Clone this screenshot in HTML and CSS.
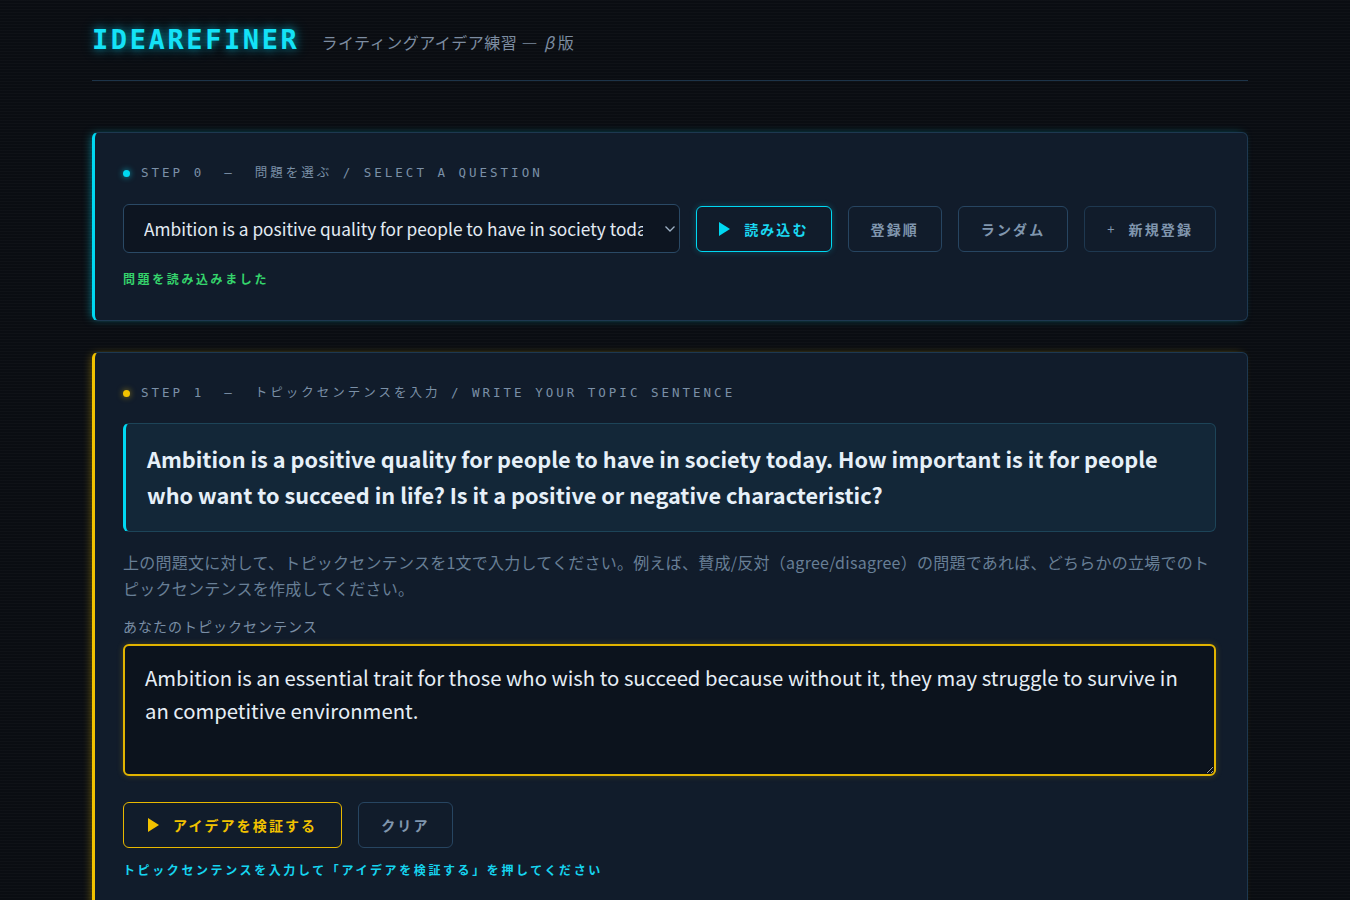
FILE: index.html
```html
<!DOCTYPE html>
<html lang="ja">
<head>
<meta charset="utf-8">
<title>IdeaRefiner</title>
<link rel="stylesheet" href="styles.css">
</head>
<body>
<div class="page">
  <header class="header">
    <div class="logo">IDEAREFINER</div>
    <div class="subtitle">ライティングアイデア練習 — <i>β</i>版</div>
  </header>

  <section class="card card-cyan">
    <div class="step"><span class="dot dot-cyan"></span>STEP 0<span class="sep">—</span>問題を選ぶ / SELECT A QUESTION</div>
    <div class="row">
      <div class="select-wrap">
        <select class="select">
          <option>Ambition is a positive quality for people to have in society today. How important is it for people who want to succeed in life? Is it a positive or negative characteristic?</option>
        </select>
        <svg class="chev" width="12" height="8" viewBox="0 0 12 8"><path d="M1.5 1.5 L6 6 L10.5 1.5" fill="none" stroke="#9fb2c6" stroke-width="1.3"/></svg>
      </div>
      <button class="btn btn-cyan"><span class="tri"></span>読み込む</button>
      <button class="btn">登録順</button>
      <button class="btn">ランダム</button>
      <button class="btn btn-dim"><span class="plus">+</span>新規登録</button>
    </div>
    <div class="status status-green">問題を読み込みました</div>
  </section>

  <section class="card card-yellow">
    <div class="step"><span class="dot dot-yellow"></span>STEP 1<span class="sep">—</span>トピックセンテンスを入力 / WRITE YOUR TOPIC SENTENCE</div>
    <div class="question">Ambition is a positive quality for people to have in society today. How important is it for people who want to succeed in life? Is it a positive or negative characteristic?</div>
    <p class="desc">上の問題文に対して、トピックセンテンスを1文で入力してください。例えば、賛成/反対（agree/disagree）の問題であれば、どちらかの立場でのトピックセンテンスを作成してください。</p>
    <div class="label">あなたのトピックセンテンス</div>
    <textarea class="answer">Ambition is an essential trait for those who wish to succeed because without it, they may struggle to survive in an competitive environment.</textarea>
    <div class="actions">
      <button class="btn btn-yellow"><span class="tri tri-yellow"></span>アイデアを検証する</button>
      <button class="btn">クリア</button>
    </div>
    <div class="status status-cyan">トピックセンテンスを入力して「アイデアを検証する」を押してください</div>
  </section>
</div>
</body>
</html>
```
FILE: styles.css
```css
* { box-sizing: border-box; }
html, body { margin: 0; padding: 0; }
body {
  background:
    repeating-linear-gradient(to bottom, rgba(255,255,255,0.018) 0, rgba(255,255,255,0.018) 1px, transparent 1px, transparent 3px),
    #0a0d12;
  color: #dbe5ef;
  font-family: "Noto Sans CJK JP", "Noto Sans", sans-serif;
  min-height: 900px;
}
.page {
  width: 1156px;
  margin-left: 92px;
}
.header {
  display: flex;
  align-items: baseline;
  gap: 22px;
  padding-top: 22px;
  height: 81px;
  border-bottom: 1px solid #1d3449;
}
.logo {
  font-family: "DejaVu Sans Mono", "Liberation Mono", monospace;
  font-weight: bold;
  font-size: 27px;
  letter-spacing: 2.6px;
  color: #14e2f7;
  text-shadow: 0 0 8px rgba(0, 220, 255, 0.6), 0 0 16px rgba(0, 220, 255, 0.25);
  line-height: 36px;
}
.subtitle {
  font-size: 16px;
  letter-spacing: 0.5px;
  color: #7c8ca0;
}
.subtitle i { font-style: italic; margin: 0 3px 0 2px; }

.card {
  background: #111c2b;
  border: 1px solid #1d3850;
  border-radius: 6px;
  padding: 31px 31px 32px 28px;
}
.card-cyan {
  margin-top: 51px;
  border-left: 3px solid #00d8f2;
  box-shadow: -3px 0 10px -3px rgba(0, 216, 242, 0.55);
}
.card-yellow {
  margin-top: 31px;
  border-left: 3px solid #f2c200;
  box-shadow: -3px 0 10px -3px rgba(242, 194, 0, 0.45);
  padding-bottom: 40px;
}
.step {
  display: flex;
  align-items: center;
  font-family: "DejaVu Sans Mono", "Liberation Mono", "Noto Sans CJK JP", monospace;
  font-size: 12.5px;
  letter-spacing: 3px;
  color: #7b90a7;
  line-height: 18px;
  white-space: nowrap;
}
.sep { margin: 0 20px 0 20px; }
.dot {
  width: 7px; height: 7px; border-radius: 50%;
  margin: 0 11px 0 0;
  flex: none;
}
.dot-cyan { background: #00d8f2; box-shadow: 0 0 6px rgba(0,216,242,0.7); }
.dot-yellow { background: #f2c200; box-shadow: 0 0 6px rgba(242,194,0,0.6); }

.row {
  display: flex;
  align-items: center;
  gap: 16px;
  margin-top: 22px;
}
.select-wrap {
  position: relative;
  flex: 1;
  min-width: 0;
}
.select {
  appearance: none;
  -webkit-appearance: none;
  width: 100%;
  height: 49px;
  background: #0d1521;
  border: 1px solid #2a4965;
  border-radius: 6px;
  color: #e3ebf3;
  font-family: "Noto Sans CJK JP", "Noto Sans", sans-serif;
  font-size: 17.3px;
  padding: 0 36px 0 20px;
}
.chev {
  position: absolute;
  right: 4px;
  top: 21px;
  pointer-events: none;
}
.btn {
  display: inline-flex;
  align-items: center;
  justify-content: center;
  flex: none;
  white-space: nowrap;
  height: 46px;
  padding: 0 22px;
  background: transparent;
  border: 1px solid #274561;
  border-radius: 6px;
  color: #8096ae;
  font-family: "Noto Sans CJK JP", "Noto Sans", sans-serif;
  font-weight: bold;
  font-size: 14px;
  letter-spacing: 2.1px;
}
.btn-dim { border-color: #1e3850; }
.btn-cyan {
  border: 1.5px solid #00d8f2;
  color: #1ad9f2;
  padding: 0 22px;
  box-shadow: 0 0 6px rgba(0, 216, 242, 0.25);
}
.btn-yellow {
  border: 1.5px solid #e8b800;
  color: #f2c200;
  padding: 0 24px;
}
.tri {
  width: 0; height: 0;
  border-left: 11px solid #00d8f2;
  border-top: 7px solid transparent;
  border-bottom: 7px solid transparent;
  margin-right: 14px;
}
.tri-yellow { border-left-color: #f2c200; }
.plus { margin-right: 12px; font-weight: normal; font-size: 13px; }

.status {
  font-size: 12px;
  font-weight: bold;
  letter-spacing: 2.6px;
  line-height: 18px;
  white-space: nowrap;
}
.status-green { color: #35d46c; margin-top: 17px; }
.status-cyan { color: #16d4ef; margin-top: 13px; }

.question {
  margin-top: 21px;
  background: #132738;
  border: 1px solid #1d4458;
  border-left: 3px solid #00d8f2;
  border-radius: 6px;
  padding: 17px 24px 18px 21px;
  font-size: 21.7px;
  font-weight: bold;
  line-height: 36px;
  color: #e6f0f8;
}
.desc {
  margin: 17px 0 0;
  font-size: 16px;
  letter-spacing: 0.25px;
  line-height: 26px;
  color: #687f96;
}
.label {
  margin-top: 15px;
  font-size: 14px;
  letter-spacing: 1px;
  line-height: 20px;
  color: #7a8ea5;
}
.answer {
  display: block;
  width: 100%;
  height: 132px;
  margin-top: 8px;
  background: #0c131d;
  border: 2px solid #e2b400;
  border-radius: 6px;
  box-shadow: 0 0 6px rgba(226, 180, 0, 0.25);
  padding: 15px 20px;
  font-family: "Noto Sans CJK JP", "Noto Sans", sans-serif;
  font-size: 20.3px;
  line-height: 33px;
  color: #e6eef6;
  outline: none;
  resize: vertical;
}
.actions {
  display: flex;
  gap: 16px;
  margin-top: 26px;
}
```
